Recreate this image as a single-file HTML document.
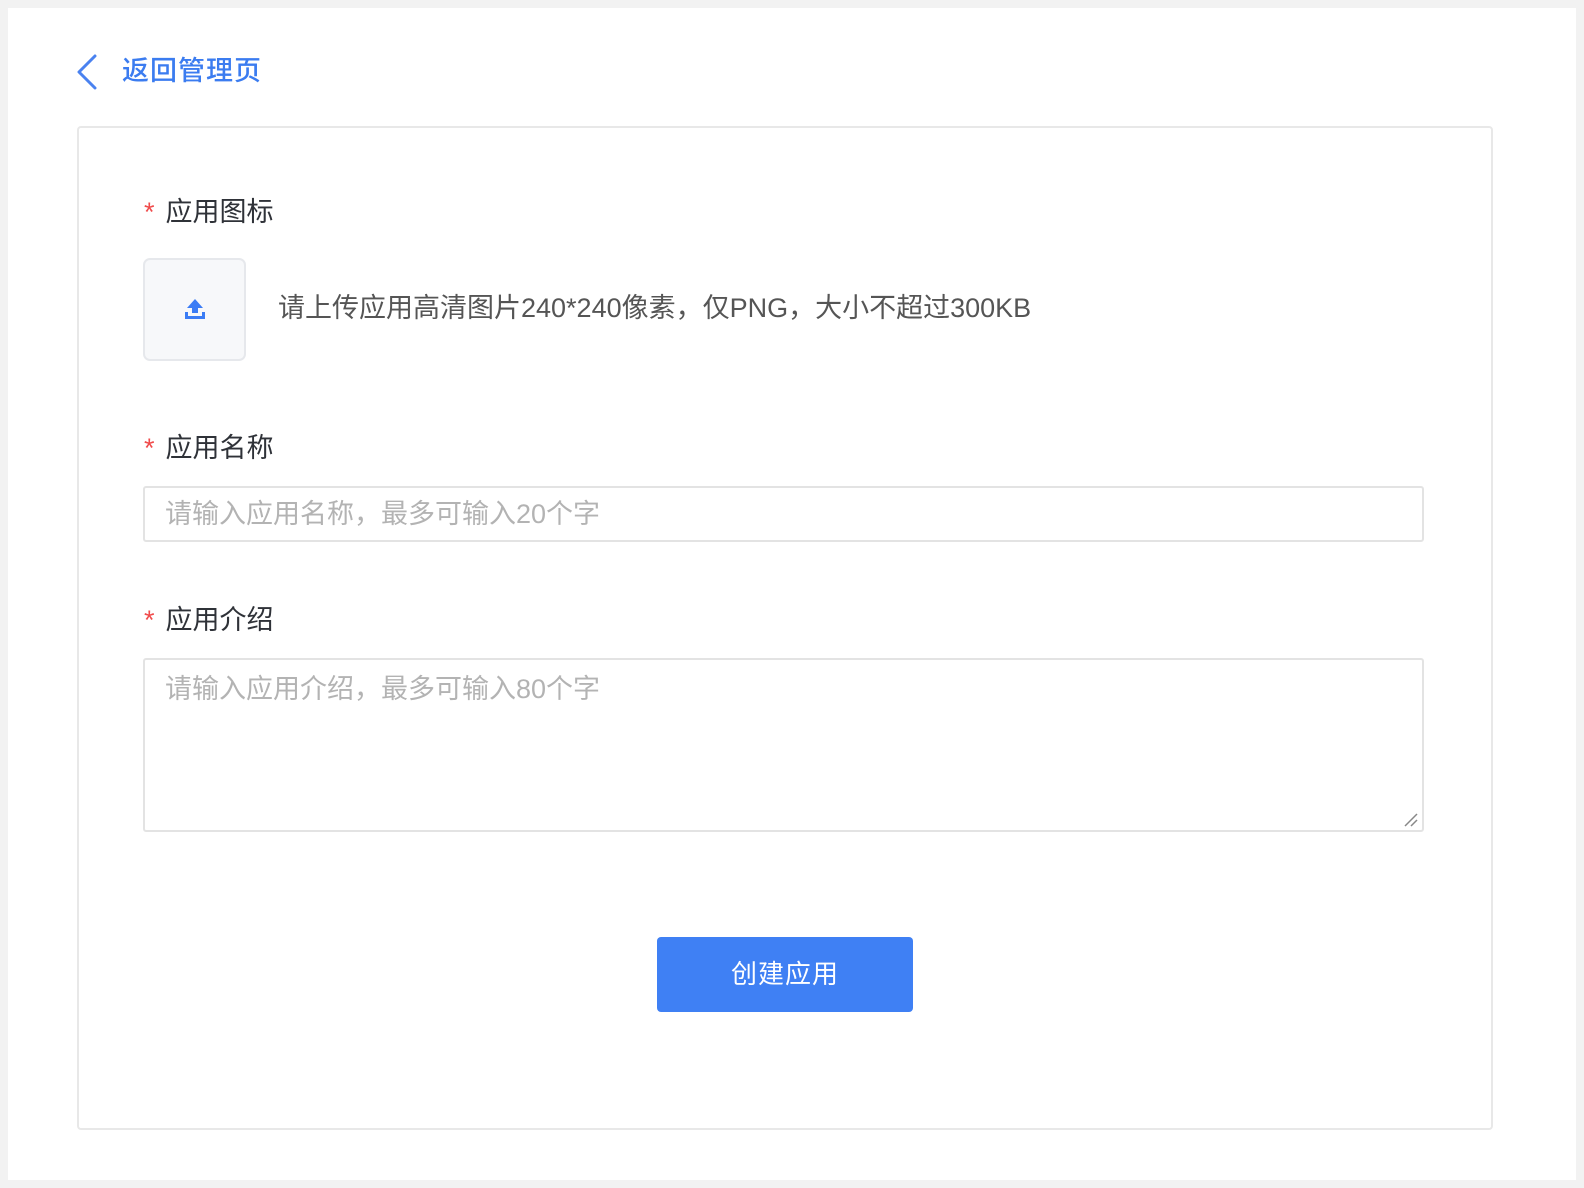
<!DOCTYPE html>
<html><head><meta charset="utf-8"><style>
*{margin:0;padding:0;box-sizing:border-box}
body{width:1584px;height:1188px;background:#f2f2f2;font-family:"Liberation Sans","Noto Sans CJK SC",sans-serif;position:relative;overflow:hidden}
.panel{position:absolute;left:8px;top:8px;width:1568px;height:1172px;background:#fff}
.abs{position:absolute}
.back{left:122px;top:53px;font-size:27px;color:#3b7cf0;font-weight:500;letter-spacing:1px;line-height:36px}
.card{left:77px;top:126px;width:1416px;height:1004px;border:2px solid #e8e8e8;border-radius:4px}
.lbl{font-size:27px;color:#2f3238;line-height:32px}
.lbl b{color:#f04b4b;font-weight:normal;margin-right:11px}
.up{left:143px;top:258px;width:103px;height:103px;background:#f7f8fa;border:2px solid #e6e8ec;border-radius:7px}
.hint{left:278px;top:292px;font-size:27px;color:#555;line-height:32px}
.inp{left:143px;width:1281px;border:2px solid #e3e3e3;border-radius:3px;font-size:27px;color:#b3b3b3;padding-left:20px}
.btn{left:657px;top:937px;width:256px;height:75px;background:#3f80f4;border-radius:4px;color:#fff;font-size:26px;text-align:center;line-height:75px;letter-spacing:1px}
</style></head><body>
<div class="panel"></div>
<svg class="abs" style="left:75px;top:54px" width="24" height="36" viewBox="0 0 24 36"><path d="M20 2 L4 18 L20 34" fill="none" stroke="#4a82f0" stroke-width="3" stroke-linecap="round" stroke-linejoin="round"/></svg>
<div class="abs back">返回管理页</div>
<div class="abs card"></div>
<div class="abs lbl" style="left:144px;top:196px"><b>*</b>应用图标</div>
<div class="abs up"></div>
<svg class="abs" style="left:184px;top:298px" width="22" height="22" viewBox="0 0 22 22"><path d="M11 1 L19 10 L14 10 L14 15 L8 15 L8 10 L3 10 Z" fill="#3b7cf5"/><path d="M1 14 V21 H21 V14 H18 V18 H4 V14 Z" fill="#3b7cf5"/></svg>
<div class="abs hint">请上传应用高清图片240*240像素，仅PNG，大小不超过300KB</div>
<div class="abs lbl" style="left:144px;top:432px"><b>*</b>应用名称</div>
<div class="abs inp" style="top:486px;height:56px;line-height:52px">请输入应用名称，最多可输入20个字</div>
<div class="abs lbl" style="left:144px;top:604px"><b>*</b>应用介绍</div>
<div class="abs inp" style="top:658px;height:174px;line-height:32px;padding-top:13px">请输入应用介绍，最多可输入80个字</div>
<svg class="abs" style="left:1402px;top:811px" width="18" height="18" viewBox="0 0 18 18"><path d="M3 15 L15 3 M9 15 L15 9" stroke="#888" stroke-width="1.5"/></svg>
<div class="abs btn">创建应用</div>
</body></html>
